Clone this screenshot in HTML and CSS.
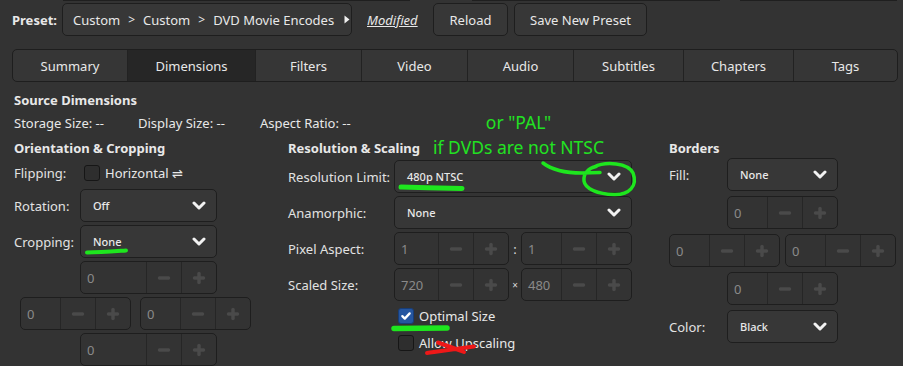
FILE: index.html
```html
<!DOCTYPE html>
<html lang="en">
  <head>
    <meta charset="UTF-8" />
    <meta name="viewport" content="width=device-width, initial-scale=1.0" />
    <title>HandBrake - Dimensions</title>
    <link rel="stylesheet" href="styles.css">
  </head>
  <body>
    <!-- shared glyphs for the spin buttons and combo arrows -->
    <svg class="defs" width="0" height="0">
      <symbol id="minus" viewBox="0 0 14 14"><path d="M2.5 7h9" /></symbol>
      <symbol id="plus" viewBox="0 0 14 14"><path d="M2.5 7h9M7 2.5v9" /></symbol>
      <symbol id="chevron" viewBox="0 0 14 9"><path d="M2 2l5 5 5-5" /></symbol>
    </svg>

    <!-- bottoms of the controls that are scrolled off the top -->
    <div class="cutoff">
      <span class="cut cut-a"></span>
      <span class="cut cut-b"></span>
      <span class="cut cut-c"></span>
    </div>

    <div class="presetbar">
      <span class="preset-label">Preset:</span>
      <div class="btn preset-btn">
        <span>Custom</span><span class="crumb">&gt;</span><span>Custom</span><span class="crumb">&gt;</span><span>DVD Movie Encodes</span>
        <svg class="tri" viewBox="0 0 6 9"><path d="M0.5 0.5L5.5 4.5 0.5 8.5z" /></svg>
      </div>
      <span class="modified">Modified</span>
      <div class="btn reload-btn">Reload</div>
      <div class="btn save-btn">Save New Preset</div>
    </div>

    <div class="tabs">
      <div class="tab">Summary</div>
      <div class="tab active">Dimensions</div>
      <div class="tab">Filters</div>
      <div class="tab">Video</div>
      <div class="tab">Audio</div>
      <div class="tab">Subtitles</div>
      <div class="tab">Chapters</div>
      <div class="tab">Tags</div>
    </div>

    <div class="source">
      <h3 class="title">Source Dimensions</h3>
      <div class="source-row">
        <span class="src-storage">Storage Size: --</span>
        <span class="src-display">Display Size: --</span>
        <span>Aspect Ratio: --</span>
      </div>
    </div>

    <div class="columns">
      <!-- Orientation & Cropping -->
      <div class="col">
        <h3 class="title">Orientation &amp; Cropping</h3>
        <div class="form form-orient">
          <span class="label">Flipping:</span>
          <label class="check"><span class="box"></span>Horizontal ⇌</label>

          <span class="label">Rotation:</span>
          <div class="combo"><span>Off</span><svg class="chev"><use href="#chevron" /></svg></div>

          <span class="label">Cropping:</span>
          <div class="combo"><span>None</span><svg class="chev"><use href="#chevron" /></svg></div>

          <div class="spin spin-wide cell-ctl">
            <span class="val">0</span>
            <span class="sb"><svg><use href="#minus" /></svg></span>
            <span class="sb"><svg><use href="#plus" /></svg></span>
          </div>

          <div class="crop-mid">
            <div class="spin">
              <span class="val">0</span>
              <span class="sb"><svg><use href="#minus" /></svg></span>
              <span class="sb"><svg><use href="#plus" /></svg></span>
            </div>
            <div class="spin">
              <span class="val">0</span>
              <span class="sb"><svg><use href="#minus" /></svg></span>
              <span class="sb"><svg><use href="#plus" /></svg></span>
            </div>
          </div>

          <div class="spin spin-wide cell-ctl">
            <span class="val">0</span>
            <span class="sb"><svg><use href="#minus" /></svg></span>
            <span class="sb"><svg><use href="#plus" /></svg></span>
          </div>
        </div>
      </div>

      <!-- Resolution & Scaling -->
      <div class="col">
        <h3 class="title">Resolution &amp; Scaling</h3>
        <div class="form form-res">
          <span class="label">Resolution Limit:</span>
          <div class="combo"><span>480p NTSC</span><svg class="chev"><use href="#chevron" /></svg></div>

          <span class="label">Anamorphic:</span>
          <div class="combo"><span>None</span><svg class="chev"><use href="#chevron" /></svg></div>

          <span class="label">Pixel Aspect:</span>
          <div class="pair">
            <div class="spin spin-first">
              <span class="val">1</span>
              <span class="sb"><svg><use href="#minus" /></svg></span>
              <span class="sb"><svg><use href="#plus" /></svg></span>
            </div>
            <span class="sep">:</span>
            <div class="spin">
              <span class="val">1</span>
              <span class="sb"><svg><use href="#minus" /></svg></span>
              <span class="sb"><svg><use href="#plus" /></svg></span>
            </div>
          </div>

          <span class="label">Scaled Size:</span>
          <div class="pair">
            <div class="spin spin-first">
              <span class="val">720</span>
              <span class="sb"><svg><use href="#minus" /></svg></span>
              <span class="sb"><svg><use href="#plus" /></svg></span>
            </div>
            <span class="sep sep-x">×</span>
            <div class="spin">
              <span class="val">480</span>
              <span class="sb"><svg><use href="#minus" /></svg></span>
              <span class="sb"><svg><use href="#plus" /></svg></span>
            </div>
          </div>

          <label class="check check-row cell-ctl">
            <span class="box checked"><svg viewBox="0 0 16 16"><path d="M3.8 8.2l2.8 2.8 5.6-6" /></svg></span>Optimal Size
          </label>
          <label class="check check-row cell-ctl"><span class="box"></span>Allow Upscaling</label>
        </div>
      </div>

      <!-- Borders -->
      <div class="col">
        <h3 class="title">Borders</h3>
        <div class="form form-borders">
          <span class="label">Fill:</span>
          <div class="combo"><span>None</span><svg class="chev"><use href="#chevron" /></svg></div>

          <div class="spin cell-ctl">
            <span class="val">0</span>
            <span class="sb"><svg><use href="#minus" /></svg></span>
            <span class="sb"><svg><use href="#plus" /></svg></span>
          </div>

          <div class="border-mid">
            <div class="spin">
              <span class="val">0</span>
              <span class="sb"><svg><use href="#minus" /></svg></span>
              <span class="sb"><svg><use href="#plus" /></svg></span>
            </div>
            <div class="spin">
              <span class="val">0</span>
              <span class="sb"><svg><use href="#minus" /></svg></span>
              <span class="sb"><svg><use href="#plus" /></svg></span>
            </div>
          </div>

          <div class="spin cell-ctl">
            <span class="val">0</span>
            <span class="sb"><svg><use href="#minus" /></svg></span>
            <span class="sb"><svg><use href="#plus" /></svg></span>
          </div>

          <span class="label">Color:</span>
          <div class="combo"><span>Black</span><svg class="chev"><use href="#chevron" /></svg></div>
        </div>
      </div>
    </div>

    <!-- hand drawn notes on top of the screenshot -->
    <div class="note">or "PAL"<br>if DVDs are not NTSC</div>
    <svg class="marks" viewBox="0 0 903 366">
      <path class="green" d="M401 187C420 187.5 445 188 462 188.5" stroke-width="5" />
      <path class="green" d="M543 163C552 170 566 173 582 173L600 172.5M594 167C606 161 628 163 633 173C638 186 629 195 614 194.5C598 194 585 189 584 181C583 173 589 168 596 166.5" stroke-width="3.5" />
      <path class="green" d="M87 252.5C100 252.5 112 251.5 126 250.5" stroke-width="4" />
      <path class="green" d="M394 328.5L447 328" stroke-width="5.5" />
      <path class="red" d="M427 353C441 351 458 348.5 474 346.5M438 342.5C448 346 456 349 464 352" stroke-width="4" />
    </svg>
  </body>
</html>
```

FILE: styles.css
```css
body {
  margin: 0;
  width: 903px;
  height: 366px;
  overflow: hidden;
  position: relative;
  background-color: #333;
  color: #e8e8e8;
  font-family: "Noto Sans", "DejaVu Sans", sans-serif;
  font-size: 13px;
  line-height: 18px;
}

.defs {
  position: absolute;
}

.cutoff {
  display: flex;
  height: 1px;
}

.cut {
  height: 0;
  border-bottom: 1px solid #1f1f1f;
}

.cut-a { margin-left: 63px; width: 347px; }
.cut-b { margin-left: 62px; width: 248px; }
.cut-c { margin-left: 20px; width: 157px; }

/* preset bar */
.presetbar {
  display: flex;
  align-items: center;
  height: 33px;
  margin-top: 2px;
  padding-left: 12px;
}

.preset-label {
  width: 50px;
  font-weight: bold;
}

.btn {
  box-sizing: border-box;
  height: 33px;
  display: flex;
  align-items: center;
  justify-content: center;
  background-color: #373737;
  border: 1px solid #1e1e1e;
  border-radius: 5px;
}

.preset-btn {
  width: 290px;
  justify-content: flex-start;
  padding-left: 10px;
}

.crumb {
  margin: 0 8px;
  font-size: 12px;
}

.tri {
  width: 6px;
  height: 9px;
  margin-left: 10px;
  fill: #f0f0f0;
}

.modified {
  margin-left: 15px;
  width: 66px;
  font-style: italic;
  text-decoration: underline;
}

.reload-btn { width: 75px; }
.save-btn { width: 133px; margin-left: 6px; }

/* tabs */
.tabs {
  display: grid;
  grid-template-columns: 114px 128px 106px 106px 106px 110px 110px 1fr;
  box-sizing: border-box;
  height: 33px;
  margin: 13px 5px 0 12px;
  background-color: #363636;
  border: 1px solid #1e1e1e;
  border-radius: 5px;
  overflow: hidden;
}

.tab {
  display: flex;
  align-items: center;
  justify-content: center;
  border-left: 1px solid #222;
}

.tab:first-child {
  border-left: none;
}

.tab.active {
  background-color: #262626;
}

/* source */
.title {
  margin: 0;
  font-size: 13px;
  font-weight: bold;
  line-height: 18px;
}

.source {
  padding-left: 14px;
  margin-top: 9px;
}

.source-row {
  display: flex;
  margin-top: 5px;
}

.src-storage { width: 124px; }
.src-display { width: 122px; }

/* columns */
.columns {
  display: grid;
  grid-template-columns: 274px 381px 1fr;
  margin-top: 7px;
  padding-left: 14px;
}

.form {
  display: grid;
  align-items: center;
}

.form-orient {
  grid-template-columns: 66px 137px;
  grid-template-rows: 26px repeat(5, 33px);
  row-gap: 3px;
  margin-top: 3px;
}

.form-res {
  grid-template-columns: 106px 238px;
  grid-template-rows: repeat(4, 33px) 24px 24px;
  row-gap: 3px;
  margin-top: 3px;
}

.form-borders {
  grid-template-columns: 58px 111px;
  grid-template-rows: repeat(5, 33px);
  row-gap: 5px;
  margin-top: 1px;
}

.label {
  color: #e2e2e2;
}

.cell-ctl {
  grid-column: 2;
}

.crop-mid {
  grid-column: 1 / span 2;
  display: flex;
  gap: 9px;
  width: 231px;
  margin-left: 6px;
}

.border-mid {
  grid-column: 1 / span 2;
  display: flex;
  gap: 5px;
  width: 227px;
}

/* combo boxes */
.combo {
  box-sizing: border-box;
  height: 33px;
  display: flex;
  align-items: center;
  justify-content: space-between;
  padding: 0 10px 0 12px;
  background-color: #373737;
  border: 1px solid #1e1e1e;
  border-radius: 5px;
  font-size: 11px;
  font-weight: 500;
}

.chev {
  width: 14px;
  height: 9px;
  fill: none;
  stroke: #f2f2f2;
  stroke-width: 3;
  stroke-linecap: round;
  stroke-linejoin: round;
}

/* spin buttons */
.spin {
  box-sizing: border-box;
  flex-shrink: 0;
  width: 111px;
  height: 33px;
  display: grid;
  grid-template-columns: 1fr 35px 35px;
  background-color: #333;
  border: 1px solid #1e1e1e;
  border-radius: 5px;
}

.spin-wide {
  width: 137px;
}

.spin-first {
  width: 115px;
}

.val {
  display: flex;
  align-items: center;
  padding-left: 6px;
  color: #8a8a8a;
}

.sb {
  display: flex;
  align-items: center;
  justify-content: center;
  border-left: 1px solid #262626;
}

.sb svg {
  width: 14px;
  height: 14px;
  fill: none;
  stroke: #4a4a4a;
  stroke-width: 3.5;
  stroke-linecap: round;
}

.pair {
  display: flex;
  align-items: center;
}

.sep {
  width: 12px;
  text-align: center;
  color: #d8d8d8;
}

.sep-x {
  font-size: 10px;
}

/* check buttons */
.check {
  display: flex;
  align-items: center;
  gap: 5px;
  padding-left: 4px;
}

.box {
  box-sizing: border-box;
  width: 16px;
  height: 16px;
  background-color: #2e2e2e;
  border: 1px solid #161616;
  border-radius: 3px;
}

.box.checked {
  background-color: #2556a0;
  border-color: #173d78;
}

.box svg {
  display: block;
  width: 14px;
  height: 14px;
  fill: none;
  stroke: #fff;
  stroke-width: 2.6;
  stroke-linecap: round;
  stroke-linejoin: round;
}

/* annotations */
.note {
  position: absolute;
  left: 418px;
  top: 110px;
  width: 201px;
  text-align: center;
  color: #22e222;
  font-size: 17.5px;
  line-height: 25px;
}

.marks {
  position: absolute;
  left: 0;
  top: 0;
  width: 903px;
  height: 366px;
  fill: none;
  stroke-linecap: round;
  stroke-linejoin: round;
  pointer-events: none;
}

.green { stroke: #1ee61e; }
.red { stroke: #ee1818; }
```
